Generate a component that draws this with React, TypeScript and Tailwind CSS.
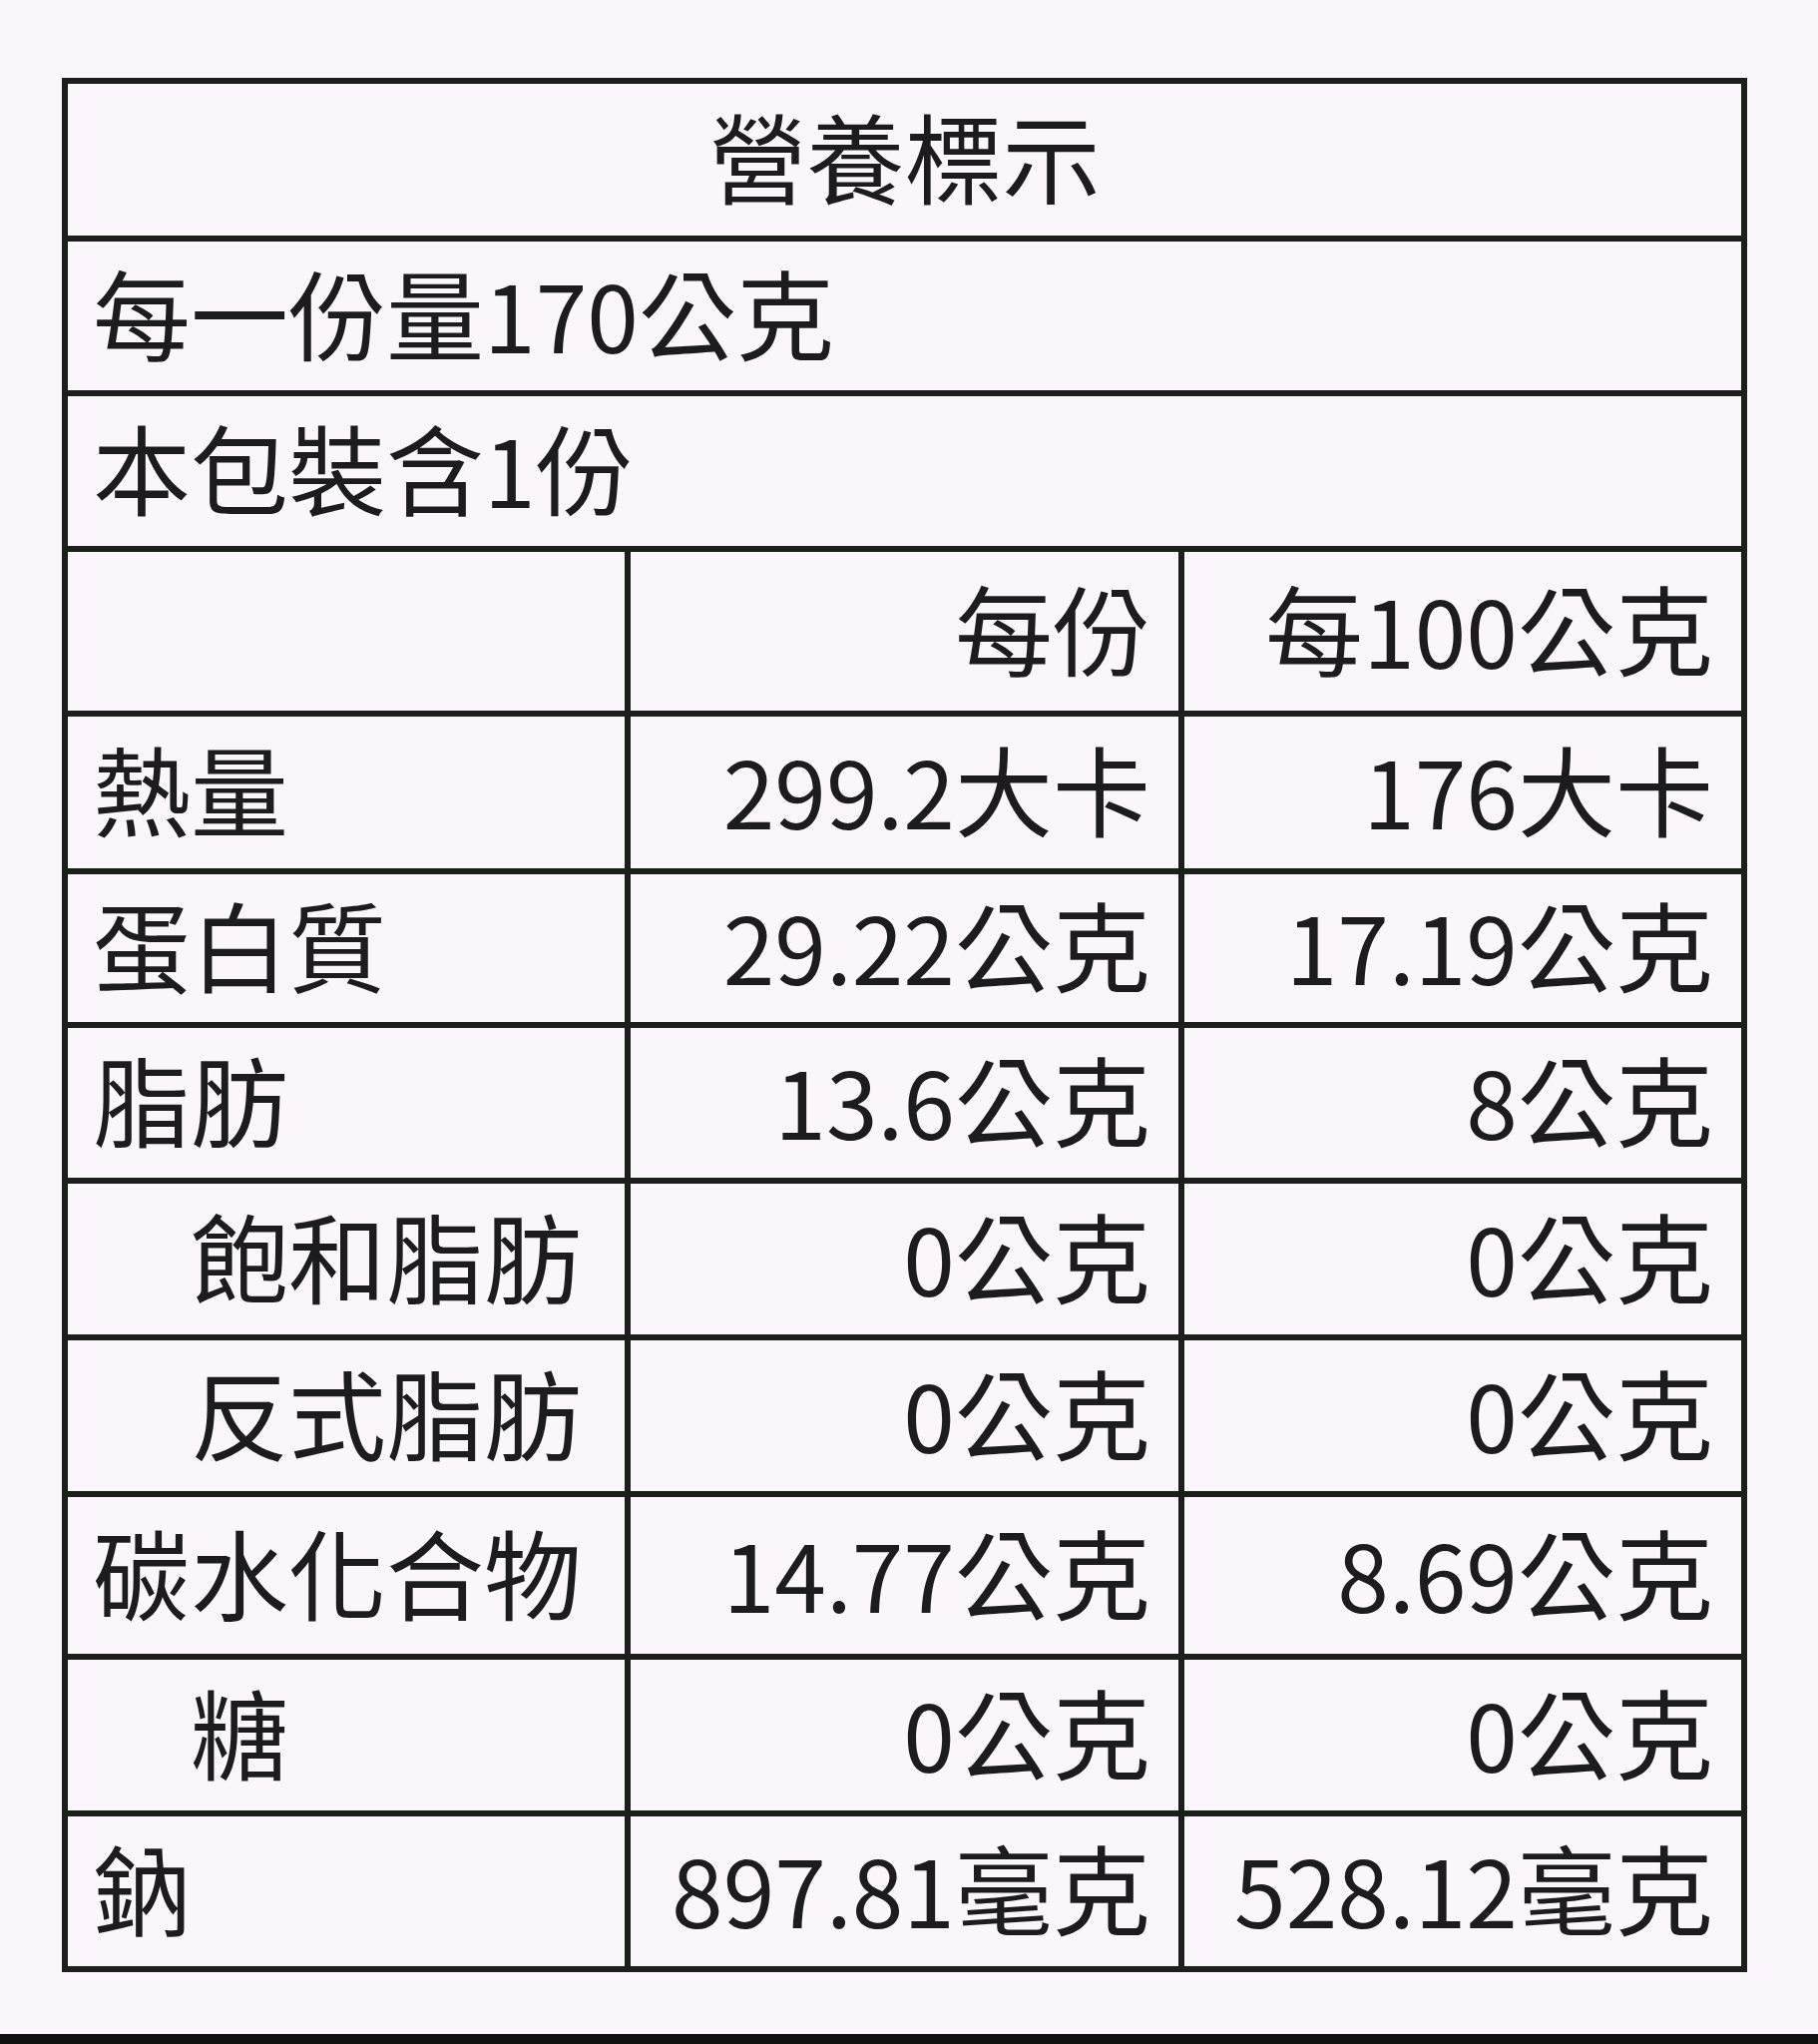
const rows = [
  { label: "熱量", per: "299.2大卡", per100: "176大卡", h: "h-[158px]" },
  { label: "蛋白質", per: "29.22公克", per100: "17.19公克", h: "h-[154px]" },
  { label: "脂肪", per: "13.6公克", per100: "8公克", h: "h-[156px]" },
  { label: "　飽和脂肪", per: "0公克", per100: "0公克", h: "h-[157px]" },
  { label: "　反式脂肪", per: "0公克", per100: "0公克", h: "h-[157px]" },
  { label: "碳水化合物", per: "14.77公克", per100: "8.69公克", h: "h-[163px]" },
  { label: "　糖", per: "0公克", per100: "0公克", h: "h-[157px]" },
  { label: "鈉", per: "897.81毫克", per100: "528.12毫克", h: "h-[156px]" },
];

const cell = "border-[6px] border-[#1b1e1b] p-0 pb-[12px] align-middle";

// digits in the label run a touch smaller than the CJK glyphs
function Txt({ s }: { s: string }) {
  const parts = s.split(/(\d[\d.]*)/);
  return (
    <>
      {parts.map((p, i) =>
        /^\d/.test(p) ? (
          <span key={i} className="text-[93px]">
            {p}
          </span>
        ) : (
          <span key={i}>{p}</span>
        )
      )}
    </>
  );
}

export default function App() {
  return (
    <div
      className="flex h-[2048px] w-[1822px] flex-col bg-[#f9f7f9] text-[#1c1c1e]"
      style={{ fontFamily: "'Noto Sans CJK TC', 'Noto Sans CJK SC', sans-serif" }}
    >
      <table className="ml-[62px] mt-[78px] w-[1689px] table-fixed border-collapse text-[98px] leading-none">
        <colgroup>
          <col className="w-[564px]" />
          <col className="w-[555px]" />
          <col className="w-[564px]" />
        </colgroup>
        <tbody>
          <tr className="h-[158px]">
            <td colSpan={3} className={`${cell} text-center`}>
              營養標示
            </td>
          </tr>
          <tr className="h-[155px]">
            <td colSpan={3} className={`${cell} pl-[25px] text-left`}>
              <Txt s="每一份量170公克" />
            </td>
          </tr>
          <tr className="h-[156px]">
            <td colSpan={3} className={`${cell} pl-[25px] text-left`}>
              <Txt s="本包裝含1份" />
            </td>
          </tr>
          <tr className="h-[165px]">
            <td className={cell}></td>
            <td className={`${cell} pr-[28px] text-right`}>每份</td>
            <td className={`${cell} pr-[28px] text-right`}>
              <Txt s="每100公克" />
            </td>
          </tr>
          {rows.map((r) => (
            <tr key={r.label} className={r.h}>
              <td className={`${cell} whitespace-pre pl-[25px] text-left`}>{r.label}</td>
              <td className={`${cell} pr-[28px] text-right`}>
                <Txt s={r.per} />
              </td>
              <td className={`${cell} pr-[28px] text-right`}>
                <Txt s={r.per100} />
              </td>
            </tr>
          ))}
        </tbody>
      </table>
      <div className="flex-1" />
      <div className="h-[10px] bg-[#101010]" />
    </div>
  );
}
